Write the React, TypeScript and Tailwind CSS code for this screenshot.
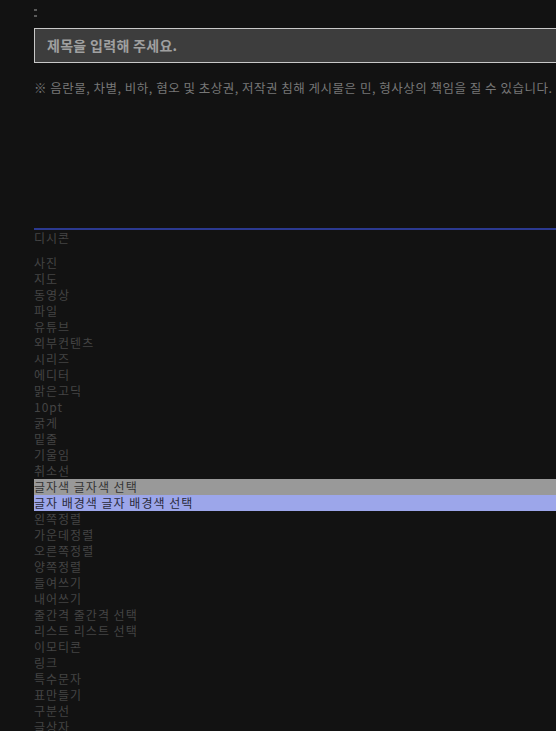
import React from "react";

const before = ["사진","지도","동영상","파일","유튜브","외부컨텐츠","시리즈","에디터","맑은고딕","10pt","굵게","밑줄","기울임","취소선"];
const after = ["왼쪽정렬","가운데정렬","오른쪽정렬","양쪽정렬","들여쓰기","내어쓰기","줄간격 줄간격 선택","리스트 리스트 선택","이모티콘","링크","특수문자","표만들기","구분선","글상자"];

export default function App() {
  return (
    <div className="w-[556px] h-[731px] overflow-hidden bg-[#121212] font-['Noto_Sans_CJK_KR',sans-serif]">
      <div className="pl-[34px]">
        <div className="h-[28px] pt-[9px] flex flex-col gap-[4px]">
          <div className="w-[3px] h-[2px] bg-[#5a5a5a]" />
          <div className="w-[3px] h-[2px] bg-[#5a5a5a]" />
        </div>
        <div className="h-[35px] w-[600px] border border-[#c8c8c8] bg-[#3d3d3d] flex items-center pl-[12px] text-[14px] tracking-[0.3px] font-bold text-[#a0a0a0]">
          제목을 입력해 주세요.
        </div>
        <div className="mt-[15px] h-[20px] leading-[20px] text-[12.5px] tracking-[0.5px] text-[#777] whitespace-nowrap">
          ※ 음란물, 차별, 비하, 혐오 및 초상권, 저작권 침해 게시물은 민, 형사상의 책임을 질 수 있습니다.
        </div>
        <div className="h-[130px]" />
        <div className="h-[2px] bg-[#2b3990]" />
        <div className="h-[16px] leading-[16px] text-[12px] tracking-[1px] text-[#444]">디시콘</div>
        <div className="h-[9px]" />
        <div className="flex flex-col text-[12px] leading-[16px] tracking-[1px] text-[#444]">
          {before.map((t) => (
            <div key={t} className="h-[16px] whitespace-nowrap">{t}</div>
          ))}
          <div className="h-[16px] whitespace-nowrap bg-[#999999] text-[#333]">글자색 글자색 선택</div>
          <div className="h-[16px] whitespace-nowrap bg-[#9ca6ea] text-[#2a2a3a]">글자 배경색 글자 배경색 선택</div>
          {after.map((t) => (
            <div key={t} className="h-[16px] whitespace-nowrap">{t}</div>
          ))}
        </div>
      </div>
    </div>
  );
}
